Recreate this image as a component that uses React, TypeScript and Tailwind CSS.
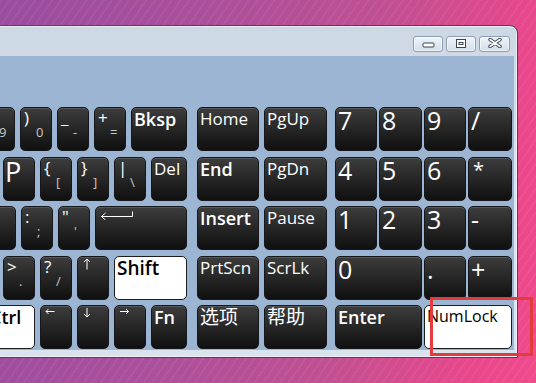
import type { ReactNode } from 'react'

const font = "font-['Open_Sans','Noto_Sans_CJK_SC',sans-serif]"

interface KeyProps {
  w: string
  light?: boolean
  children?: ReactNode
}

function Key({ w, light = false, children }: KeyProps) {
  return (
    <div
      className={`${w} h-[44px] shrink-0 rounded-[5px] border ${
        light
          ? 'border-[#1c1c1c] bg-white text-black'
          : 'border-[#15171a] bg-gradient-to-b from-[#3d3d3d] via-[#262626] to-[#101010] text-white shadow-[inset_0_1px_0_rgba(255,255,255,0.14)]'
      }`}
    >
      {children}
    </div>
  )
}

// plain word label, top-left
function Label({ text, bold = false, size = 'text-[17px]' }: { text: string; bold?: boolean; size?: string }) {
  return (
    <span className={`block whitespace-nowrap pl-[2px] pt-[2px] leading-none ${size} ${bold ? 'font-semibold' : 'font-normal'}`}>
      {text}
    </span>
  )
}

// large digit / letter
function Big({ text }: { text: string }) {
  return <span className="block pl-[2px] text-[25px] leading-none">{text}</span>
}

// shifted symbol on top, normal one below
function Sym({ top, low }: { top: string; low: string }) {
  return (
    <div className="flex flex-col pl-[3px] pt-[1px] leading-none">
      <span className="h-[17px] text-[17px] text-white">{top}</span>
      <span className="ml-[12px] text-[13px] text-[#c9c9c9]">{low}</span>
    </div>
  )
}

function ArrowIcon({ dir }: { dir: 'up' | 'down' | 'left' | 'right' }) {
  if (dir === 'up')
    return (
      <svg width="8" height="12" viewBox="0 0 8 12" className="ml-[5px] mt-[1px]" fill="none" stroke="#fff" strokeWidth="1">
        <path d="M4 11.5V1M1 4l3-3 3 3" />
      </svg>
    )
  if (dir === 'down')
    return (
      <svg width="8" height="10" viewBox="0 0 8 10" className="ml-[5px] mt-[2px]" fill="none" stroke="#fff" strokeWidth="1">
        <path d="M4 0v9M1 6l3 3 3-3" />
      </svg>
    )
  if (dir === 'left')
    return (
      <svg width="10" height="7" viewBox="0 0 10 7" className="ml-[4px] mt-[2px]" fill="none" stroke="#fff" strokeWidth="1">
        <path d="M9.5 3.5H1M3.5 1 1 3.5 3.5 6" />
      </svg>
    )
  return (
    <svg width="10" height="7" viewBox="0 0 10 7" className="ml-[5px] mt-[2px]" fill="none" stroke="#fff" strokeWidth="1">
      <path d="M0 3.5h8.5M6 1l2.5 2.5L6 6" />
    </svg>
  )
}

function EnterArrow() {
  return (
    <svg width="34" height="10" viewBox="0 0 34 10" className="ml-[4px] mt-[3px]" fill="none" stroke="#fff" strokeWidth="1">
      <path d="M1.5 6.5H32.5V1.5M5.5 3 1.5 6.5 5.5 10" />
    </svg>
  )
}

function Row({ children }: { children: ReactNode }) {
  return <div className="flex h-[44px]">{children}</div>
}

function LeftGroup({ children }: { children: ReactNode }) {
  return <div className="flex w-[204px] shrink-0 justify-end gap-[5px]">{children}</div>
}

function NavGroup({ children }: { children: ReactNode }) {
  return <div className="ml-[10px] flex shrink-0 gap-[5px]">{children}</div>
}

function PadGroup({ children }: { children: ReactNode }) {
  return <div className="ml-[8px] flex shrink-0 gap-[2px]">{children}</div>
}

function TitleButton({ children, w = 'w-[30px]' }: { children: ReactNode; w?: string }) {
  return (
    <div className={`${w} flex h-[16px] justify-center rounded-[3px] border border-[#8e9db1] bg-gradient-to-b from-[#eef3f8] to-[#d4dfea] shadow-[inset_0_0_0_1px_rgba(255,255,255,0.6)]`}>
      {children}
    </div>
  )
}

export default function App() {
  return (
    <div
      className={`relative h-[383px] w-[536px] overflow-hidden ${font} bg-[repeating-linear-gradient(125deg,rgba(255,255,255,0.05)_0px,rgba(255,255,255,0.05)_2px,transparent_2px,transparent_7px),linear-gradient(100deg,#9a4c9f_0%,#ab4f9b_35%,#c14f92_65%,#e8478b_88%,#f04a8a_100%)]`}
    >
      {/* on-screen keyboard window */}
      <div className="absolute left-[-40px] top-[25px] flex h-[333px] w-[558px] flex-col rounded-tr-[8px] border border-[#4b4359] bg-gradient-to-b from-[#cdd8e5] via-[#dbe4ee] to-[#d9e3ee] shadow-[inset_0_0_0_1px_rgba(255,255,255,0.55)]">
        <div className="flex h-[30px] shrink-0 items-start justify-end gap-[3px] pr-[7px] pt-[10px]">
          <TitleButton>
            <svg width="13" height="6" viewBox="0 0 13 6" className="mt-[5px]">
              <rect x="1" y="1" width="11" height="4" rx="1" fill="#fff" stroke="#3a4452" strokeWidth="1" />
            </svg>
          </TitleButton>
          <TitleButton>
            <svg width="10" height="9" viewBox="0 0 10 9" className="mt-[2px]">
              <rect x="0.5" y="0.5" width="9" height="8" fill="#fff" stroke="#3a4452" />
              <rect x="2.5" y="3" width="5" height="3" fill="#3a4452" />
              <rect x="3.5" y="4" width="3" height="1" fill="#fff" />
            </svg>
          </TitleButton>
          <TitleButton w="w-[31px]">
            <svg width="14" height="10" viewBox="0 0 14 10" className="mt-[1px]">
              <path d="M2 1.5 7 5 12 1.5M2 8.5 7 5 12 8.5" stroke="#3a4452" strokeWidth="3.4" strokeLinecap="round" fill="none" />
              <path d="M2 1.5 7 5 12 1.5M2 8.5 7 5 12 8.5" stroke="#fff" strokeWidth="1.6" strokeLinecap="round" fill="none" />
            </svg>
          </TitleButton>
        </div>

        <div className="mb-[7px] mr-[3px] flex flex-1 flex-col gap-[5.5px] bg-[#9bb5d3] pl-[22px] pt-[51px]">
          <Row>
            <LeftGroup>
              <Key w="w-[32px]"><Sym top="(" low="9" /></Key>
              <Key w="w-[32px]"><Sym top=")" low="0" /></Key>
              <Key w="w-[32px]"><Sym top="_" low="-" /></Key>
              <Key w="w-[32px]"><Sym top="+" low="=" /></Key>
              <Key w="w-[56px]"><Label text="Bksp" bold size="text-[18px]" /></Key>
            </LeftGroup>
            <NavGroup>
              <Key w="w-[62px]"><Label text="Home" /></Key>
              <Key w="w-[63px]"><Label text="PgUp" /></Key>
            </NavGroup>
            <PadGroup>
              <Key w="w-[42px]"><Big text="7" /></Key>
              <Key w="w-[43px]"><Big text="8" /></Key>
              <Key w="w-[42px]"><Big text="9" /></Key>
              <Key w="w-[44px]"><Big text="/" /></Key>
            </PadGroup>
          </Row>

          <Row>
            <LeftGroup>
              <Key w="w-[32px]"><span className="block pl-[1px] text-[27px] leading-none">P</span></Key>
              <Key w="w-[32px]"><Sym top="{" low="[" /></Key>
              <Key w="w-[32px]"><Sym top="}" low="]" /></Key>
              <Key w="w-[32px]"><Sym top="|" low="\" /></Key>
              <Key w="w-[36px]"><Label text="Del" /></Key>
            </LeftGroup>
            <NavGroup>
              <Key w="w-[62px]"><Label text="End" bold size="text-[18px]" /></Key>
              <Key w="w-[63px]"><Label text="PgDn" /></Key>
            </NavGroup>
            <PadGroup>
              <Key w="w-[42px]"><Big text="4" /></Key>
              <Key w="w-[43px]"><Big text="5" /></Key>
              <Key w="w-[42px]"><Big text="6" /></Key>
              <Key w="w-[44px]"><span className="block pl-[4px] pt-[2px] text-[20px] leading-none">*</span></Key>
            </PadGroup>
          </Row>

          <Row>
            <LeftGroup>
              <Key w="w-[32px]" />
              <Key w="w-[32px]"><Sym top=":" low=";" /></Key>
              <Key w="w-[32px]"><Sym top={'"'} low="'" /></Key>
              <Key w="w-[92px]"><EnterArrow /></Key>
            </LeftGroup>
            <NavGroup>
              <Key w="w-[62px]"><Label text="Insert" bold size="text-[18px]" /></Key>
              <Key w="w-[63px]"><Label text="Pause" /></Key>
            </NavGroup>
            <PadGroup>
              <Key w="w-[42px]"><Big text="1" /></Key>
              <Key w="w-[43px]"><Big text="2" /></Key>
              <Key w="w-[42px]"><Big text="3" /></Key>
              <Key w="w-[44px]"><Big text="-" /></Key>
            </PadGroup>
          </Row>

          <Row>
            <LeftGroup>
              <Key w="w-[32px]"><Sym top=">" low="." /></Key>
              <Key w="w-[32px]"><Sym top="?" low="/" /></Key>
              <Key w="w-[32px]"><ArrowIcon dir="up" /></Key>
              <Key w="w-[73px]" light><Label text="Shift" bold size="text-[19px]" /></Key>
            </LeftGroup>
            <NavGroup>
              <Key w="w-[62px]"><Label text="PrtScn" /></Key>
              <Key w="w-[63px]"><Label text="ScrLk" /></Key>
            </NavGroup>
            <PadGroup>
              <Key w="w-[87px]"><Big text="0" /></Key>
              <Key w="w-[42px]"><Big text="." /></Key>
              <Key w="w-[44px]"><Big text="+" /></Key>
            </PadGroup>
          </Row>

          <Row>
            <LeftGroup>
              <Key w="w-[48px]" light><Label text="Ctrl" bold size="text-[18px]" /></Key>
              <Key w="w-[32px]"><ArrowIcon dir="left" /></Key>
              <Key w="w-[32px]"><ArrowIcon dir="down" /></Key>
              <Key w="w-[32px]"><ArrowIcon dir="right" /></Key>
              <Key w="w-[36px]"><Label text="Fn" bold size="text-[18px]" /></Key>
            </LeftGroup>
            <NavGroup>
              <Key w="w-[62px]"><Label text="选项" size="text-[19px]" /></Key>
              <Key w="w-[63px]"><Label text="帮助" size="text-[19px]" /></Key>
            </NavGroup>
            <PadGroup>
              <Key w="w-[87px]"><Label text="Enter" bold size="text-[18px]" /></Key>
              <Key w="w-[88px]" light><Label text="NumLock" size="text-[16px]" /></Key>
            </PadGroup>
          </Row>
        </div>
      </div>

      {/* red highlight box */}
      <div className="absolute left-[430px] top-[297px] h-[59px] w-[103px] border-[3px] border-[#e43c3c]" />
    </div>
  )
}
